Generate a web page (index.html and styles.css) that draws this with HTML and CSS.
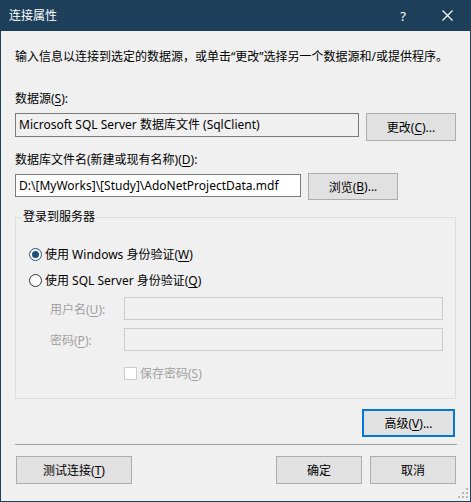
FILE: index.html
```html
<!DOCTYPE html>
<html lang="zh-CN">
<head>
<meta charset="utf-8">
<title>连接属性</title>
<link rel="stylesheet" href="styles.css">
</head>
<body>
<div class="window">
  <div class="titlebar">
    <span class="title">连接属性</span>
    <div class="caption-btns">
      <span class="help">?</span>
      <svg class="close" width="11" height="11" viewBox="0 0 11 11"><path d="M0.5 0.5 L10.5 10.5 M10.5 0.5 L0.5 10.5" stroke="#fff" stroke-width="1.2" fill="none"/></svg>
    </div>
  </div>
  <div class="content">
    <p class="intro">输入信息以连接到选定的数据源，或单击“更改”选择另一个数据源和/或提供程序。</p>

    <div class="label lbl-src">数据源(<u>S</u>):</div>
    <div class="row row-src">
      <div class="textbox readonly src-box">Microsoft SQL Server 数据库文件 (SqlClient)</div>
      <div class="btn btn-change">更改(<u>C</u>)...</div>
    </div>

    <div class="label lbl-file">数据库文件名(新建或现有名称)(<u>D</u>):</div>
    <div class="row row-file">
      <div class="textbox file-box">D:\[MyWorks]\[Study]\AdoNetProjectData.mdf</div>
      <div class="btn btn-browse">浏览(<u>B</u>)...</div>
    </div>

    <fieldset class="group">
      <legend>登录到服务器</legend>
      <div class="group-inner">
        <div class="radio-row r1">
          <span class="radio checked"><span class="dot"></span></span>
          <span>使用 Windows 身份验证(<u>W</u>)</span>
        </div>
        <div class="radio-row r2">
          <span class="radio"></span>
          <span>使用 SQL Server 身份验证(<u>Q</u>)</span>
        </div>
        <div class="field-row f1">
          <span class="field-label disabled">用户名(<u>U</u>):</span>
          <div class="textbox disabled-box"></div>
        </div>
        <div class="field-row f2">
          <span class="field-label disabled">密码(<u>P</u>):</span>
          <div class="textbox disabled-box"></div>
        </div>
        <div class="check-row">
          <span class="checkbox"></span>
          <span class="disabled">保存密码(<u>S</u>)</span>
        </div>
      </div>
    </fieldset>

    <div class="row row-adv">
      <div class="btn btn-adv">高级(<u>V</u>)...</div>
    </div>

    <div class="separator"></div>

    <div class="row row-bottom">
      <div class="btn btn-test">测试连接(<u>T</u>)</div>
      <div class="spacer"></div>
      <div class="btn btn-ok">确定</div>
      <div class="btn btn-cancel">取消</div>
    </div>
  </div>
  <svg class="grip" width="10" height="10" viewBox="0 0 10 10">
    <rect x="8" y="0" width="2" height="2" fill="#b8b8b8"/>
    <rect x="4" y="4" width="2" height="2" fill="#b8b8b8"/>
    <rect x="8" y="4" width="2" height="2" fill="#b8b8b8"/>
    <rect x="0" y="8" width="2" height="2" fill="#b8b8b8"/>
    <rect x="4" y="8" width="2" height="2" fill="#b8b8b8"/>
    <rect x="8" y="8" width="2" height="2" fill="#b8b8b8"/>
  </svg>
</div>
</body>
</html>
```

FILE: styles.css
```css
* { box-sizing: border-box; }
html, body { margin: 0; padding: 0; background: #f0f0f0; }
body {
  font-family: "Noto Sans", "Noto Sans CJK SC", sans-serif;
  font-size: 12px;
  color: #000;
}
u { text-decoration: underline; text-underline-offset: 2px; }

.window {
  position: relative;
  width: 471px;
  height: 502px;
  border: 1px solid #1d3f5a;
  border-top: none;
  background: #f0f0f0;
  display: flex;
  flex-direction: column;
}

.titlebar {
  height: 31px;
  margin: 0 -1px;
  background: #1d3f5a;
  color: #fff;
  display: flex;
  align-items: center;
  justify-content: space-between;
  padding-left: 9px;
  flex-shrink: 0;
}
.title { font-size: 12px; line-height: 16px; }
.caption-btns {
  display: flex;
  align-items: center;
  height: 100%;
}
.help {
  font-family: "Noto Sans", sans-serif;
  font-size: 13px;
  line-height: 16px;
  margin-right: 36px;
}
.close { margin-right: 18px; }

.content {
  padding: 0 14px;
  display: flex;
  flex-direction: column;
}
.intro {
  margin: 18px 0 0 0;
  line-height: 16px;
  white-space: nowrap;
  letter-spacing: 0;
}
.label { line-height: 16px; white-space: nowrap; }
.lbl-src { margin-top: 26px; }
.lbl-file { margin-top: 11px; }

.row { display: flex; align-items: flex-start; }
.row-src { margin-top: 6px; gap: 7px; }
.row-file { margin-top: 5px; gap: 7px; }

.textbox {
  border: 1px solid #7a7a7a;
  background: #fff;
  padding: 0 3px;
  line-height: 22px;
  height: 24px;
  white-space: nowrap;
  overflow: hidden;
}
.readonly { background: #f0f0f0; }
.src-box { width: 344px; }
.file-box { width: 286px; margin-top: 1px; height: 23px; line-height: 21px; }

.btn {
  border: 1px solid #adadad;
  background: #e1e1e1;
  height: 28px;
  display: flex;
  align-items: center;
  justify-content: center;
  white-space: nowrap;
}
.btn-change { width: 90px; }
.btn-browse { width: 90px; height: 27px; }

.group {
  margin: 9px 0 0 0;
  padding: 0;
  border: 1px solid #dcdcdc;
  min-width: 0;
}
.group legend {
  margin-left: 6px;
  padding: 0 1px;
  line-height: 16px;
}
.group-inner {
  padding: 19px 12px 17px 13px;
  display: flex;
  flex-direction: column;
}
.radio-row {
  display: flex;
  align-items: center;
  height: 20px;
  gap: 3px;
  white-space: nowrap;
}
.r2 { margin-top: 6px; }
.radio {
  width: 13px;
  height: 13px;
  border-radius: 50%;
  border: 1px solid #333;
  background: #fff;
  display: flex;
  align-items: center;
  justify-content: center;
}
.radio.checked { border-color: #1f4f7c; }
.dot {
  width: 7px;
  height: 7px;
  border-radius: 50%;
  background: #1f4f7c;
}
.field-row {
  display: flex;
  align-items: center;
  padding-left: 21px;
}
.f1 { margin-top: 7px; }
.f2 { margin-top: 8px; }
.field-label { width: 74px; white-space: nowrap; }
.disabled { color: #a0a0a0; }
.disabled-box {
  flex: 0 0 319px;
  height: 23px;
  border-color: #cccccc;
  background: #f0f0f0;
}
.check-row {
  display: flex;
  align-items: center;
  height: 16px;
  margin-top: 14px;
  padding-left: 95px;
  gap: 3px;
  white-space: nowrap;
}
.checkbox {
  width: 13px;
  height: 13px;
  border: 1px solid #cccccc;
  background: #fff;
}

.row-adv { justify-content: flex-end; margin-top: 10px; padding-right: 1px; }
.btn-adv {
  width: 93px;
  border: 2px solid #0078d7;
}
.separator {
  height: 1px;
  background: #a0a0a0;
  margin-top: 7px;
  margin-right: -1px;
}
.row-bottom { margin-top: 11px; padding-left: 1px; }
.btn-test { width: 116px; }
.spacer { flex: 1; }
.btn-ok { width: 86px; }
.btn-cancel { width: 86px; margin-left: 8px; }

.grip {
  position: absolute;
  right: 2px;
  bottom: 3px;
}
```
